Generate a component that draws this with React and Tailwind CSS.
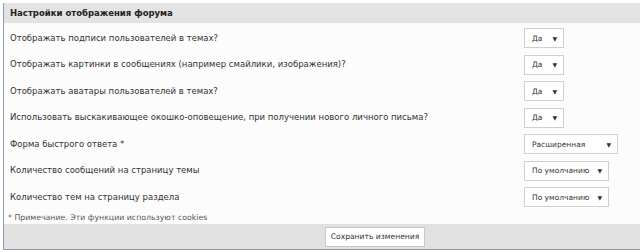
import React from 'react';

const rows = [
  { label: 'Отображать подписи пользователей в темах?', value: 'Да', w: 'w-[40px]' },
  { label: 'Отображать картинки в сообщениях (например смайлики, изображения)?', value: 'Да', w: 'w-[40px]' },
  { label: 'Отображать аватары пользователей в темах?', value: 'Да', w: 'w-[40px]' },
  { label: 'Использовать выскакивающее окошко-оповещение, при получении нового личного письма?', value: 'Да', w: 'w-[40px]' },
  { label: 'Форма быстрого ответа *', value: 'Расширенная', w: 'w-[94px]' },
  { label: 'Количество сообщений на страницу темы', value: 'По умолчанию', w: 'w-[85px]' },
  { label: 'Количество тем на страницу раздела', value: 'По умолчанию', w: 'w-[85px]' },
];

const Select = ({ value, w }) => (
  <div className={`${w} h-[20px] flex items-center justify-between whitespace-nowrap border border-[#cfcfcf] bg-white pl-[7px] pr-[6px] text-[7.5px] text-[#333]`}>
    <span>{value}</span>
    <span className="text-[6px]">▼</span>
  </div>
);

const App = () => {
  return (
    <div className="w-[640px] h-[252px] bg-white pt-[3px] pl-[3px] font-['DejaVu_Sans',Verdana,sans-serif]">
      <div className="h-[247px] border-l border-b border-[#8d9bb0] flex flex-col">
        <div className="h-[20px] bg-[#e3e3e3] flex items-center pl-[6px] text-[8.5px] font-bold text-[#222]">
          Настройки отображения форума
        </div>
        <div className="flex-1 bg-[#fcfcfc] flex flex-col pt-[2px]">
          {rows.map((r) => (
            <div key={r.label} className="h-[26.5px] flex items-center pl-[6px] text-[8.5px] text-[#333]">
              <span className="w-[514px] whitespace-nowrap">{r.label}</span>
              <Select value={r.value} w={r.w} />
            </div>
          ))}
          <div className="pl-[4px] pt-[1px] text-[7.8px] text-[#555] whitespace-nowrap">* Примечание. Эти функции используют cookies</div>
        </div>
        <div className="h-[25px] bg-[#e1e1e1] flex items-center pl-[321px]">
          <button className="w-[100px] h-[20px] border border-[#c8c8c8] bg-white text-[7.6px] text-[#333] whitespace-nowrap">
            Сохранить изменения
          </button>
        </div>
      </div>
    </div>
  );
};

export default App;
